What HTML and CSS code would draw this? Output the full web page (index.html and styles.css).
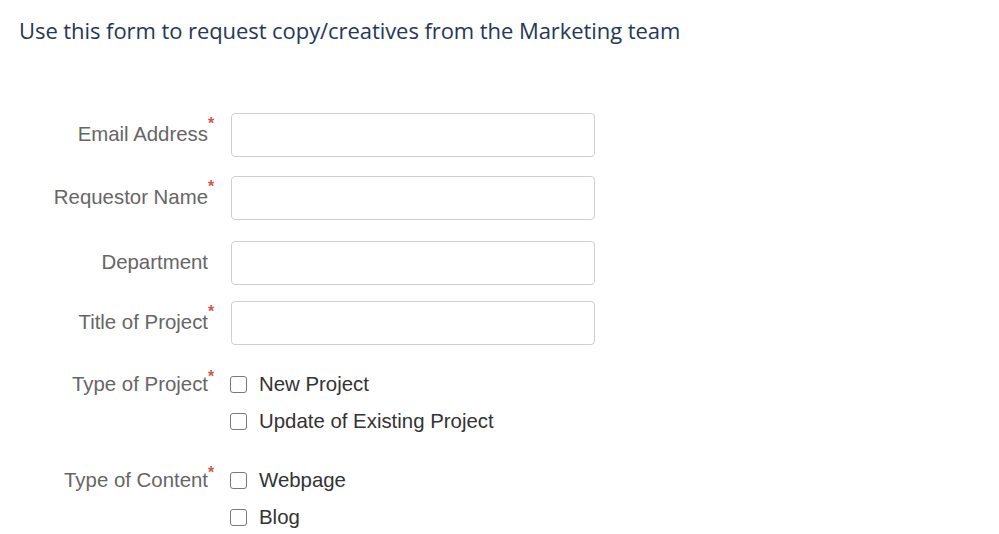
FILE: index.html
```html
<!DOCTYPE html>
<html lang="en">
<head>
<meta charset="utf-8">
<title>Marketing request form</title>
<link rel="stylesheet" href="styles.css">
</head>
<body>
<div class="page">
  <h1 class="intro">Use this form to request copy/creatives from the Marketing team</h1>
  <form class="form">
    <div class="row">
      <label class="label"><span class="label-text req">Email Address<span class="star">*</span></span></label>
      <input class="field" type="text">
    </div>
    <div class="row">
      <label class="label"><span class="label-text req">Requestor Name<span class="star">*</span></span></label>
      <input class="field" type="text">
    </div>
    <div class="row row-wide">
      <label class="label"><span class="label-text">Department</span></label>
      <input class="field" type="text">
    </div>
    <div class="row row-tight">
      <label class="label"><span class="label-text req">Title of Project<span class="star">*</span></span></label>
      <input class="field" type="text">
    </div>
    <div class="group group-first">
      <div class="label group-label"><span class="label-text req">Type of Project<span class="star">*</span></span></div>
      <div class="options">
        <label class="option"><input class="box" type="checkbox"><span>New Project</span></label>
        <label class="option"><input class="box" type="checkbox"><span>Update of Existing Project</span></label>
      </div>
    </div>
    <div class="group">
      <div class="label group-label"><span class="label-text req">Type of Content<span class="star">*</span></span></div>
      <div class="options">
        <label class="option"><input class="box" type="checkbox"><span>Webpage</span></label>
        <label class="option"><input class="box" type="checkbox"><span>Blog</span></label>
      </div>
    </div>
  </form>
</div>
</body>
</html>
```
FILE: styles.css
```css
html, body {
  margin: 0;
  padding: 0;
  background: #ffffff;
}
body {
  font-family: "Liberation Sans", Arial, sans-serif;
}
.page {
  padding: 0;
}
.intro {
  margin: 16px 0 0 19px;
  font-family: "Open Sans", "Noto Sans", sans-serif;
  font-weight: 400;
  font-size: 22px;
  line-height: 28px;
  color: #253858;
  letter-spacing: -0.07px;
}
.form {
  margin-top: 69px;
  display: flex;
  flex-direction: column;
}
.row {
  display: grid;
  grid-template-columns: 208px 364px;
  column-gap: 23px;
  align-items: center;
  margin-top: 19px;
}
.row:first-child {
  margin-top: 0;
}
.row-wide {
  margin-top: 21px;
}
.row-tight {
  margin-top: 16px;
}
.label {
  text-align: right;
  font-size: 20.4px;
  line-height: 24px;
  color: #666666;
  padding-bottom: 3px;
}
.label-text {
  position: relative;
}
.star {
  position: absolute;
  left: 100%;
  top: -7px;
  margin-left: 0;
  font-size: 16px;
  line-height: 16px;
  color: #d9534f;
  font-weight: 700;
}
.field {
  box-sizing: border-box;
  width: 364px;
  height: 44px;
  margin: 0;
  border: 1px solid #cfcfcf;
  border-radius: 4px;
  background: #ffffff;
  font: inherit;
}
.group {
  display: grid;
  grid-template-columns: 208px 1fr;
  column-gap: 22px;
  align-items: start;
  margin-top: 22px;
}
.group-first {
  margin-top: 21px;
}
.group-label {
  line-height: 37px;
  padding-bottom: 0;
}
.group-label .star {
  top: -4px;
}
.options {
  display: flex;
  flex-direction: column;
}
.option {
  display: flex;
  align-items: center;
  height: 37px;
  font-size: 20.4px;
  color: #333333;
  padding-bottom: 1px;
  box-sizing: border-box;
}
.box {
  appearance: none;
  -webkit-appearance: none;
  box-sizing: border-box;
  width: 17px;
  height: 17px;
  margin: 0 12px 0 0;
  border: 1.5px solid #7a7a7a;
  border-radius: 3px;
  background: #ffffff;
  flex: none;
}
```
